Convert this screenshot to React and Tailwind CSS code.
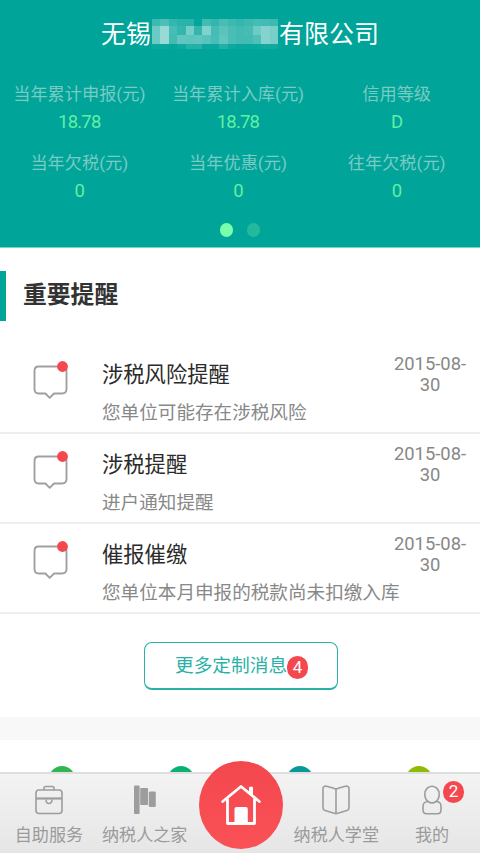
const stats = [
    { label: "当年累计申报(元)", value: "18.78" },
    { label: "当年累计入库(元)", value: "18.78" },
    { label: "信用等级", value: "D" },
    { label: "当年欠税(元)", value: "0" },
    { label: "当年优惠(元)", value: "0" },
    { label: "往年欠税(元)", value: "0" },
];

const reminders = [
    { id: 1, title: "涉税风险提醒", desc: "您单位可能存在涉税风险", date: "2015-08-30" },
    { id: 2, title: "涉税提醒", desc: "进户通知提醒", date: "2015-08-30" },
    { id: 3, title: "催报催缴", desc: "您单位本月申报的税款尚未扣缴入库", date: "2015-08-30" },
];

// White opacity (in %) of each block that masks the company name
const maskRows = [
    { height: 7, cells: [24, 30, 20, 17, 17, 2, 26, 20, 28, 24, 20, 24, 27, 26, 24] },
    { height: 9, cells: [42, 60, 28, 20, 46, 20, 50, 27, 35, 29, 26, 27, 43, 52, 47] },
    { height: 9, cells: [42, 60, 26, 38, 36, 38, 34, 28, 38, 29, 26, 26, 31, 52, 47] },
    { height: 5, cells: [4, 4, 2, 5, 15, 15, 3, 3, 13, 5, 3, 3, 4, 7, 6] },
];

const NameMask = () => (
    <div className="h-[30px] w-[126px]">
        {maskRows.map((row, i) => (
            <div key={i} className="flex" style={{ height: row.height }}>
                {row.cells.map((cell, j) => (
                    <div key={j} className="flex-1" style={{ backgroundColor: `rgba(255,255,255,${cell / 100})` }} />
                ))}
            </div>
        ))}
    </div>
);

const Header = () => (
    <header className="h-[248px] border-b border-[#7fd0cb] bg-[#00a499]">
        <div className="flex h-[68px] items-center justify-center gap-[1px] text-[25px] text-white">
            <span className="pt-[2px]">无锡</span>
            <NameMask />
            <span className="pt-[2px]">有限公司</span>
        </div>
        <div className="grid w-[476px] grid-cols-3 pt-3 text-center">
            {stats.map((stat) => (
                <div key={stat.label} className="h-[69px]">
                    <div className="h-7 text-[17.2px] leading-7 text-[#79cbc4]">{stat.label}</div>
                    <div className="h-7 text-[18.5px] leading-[28px] tracking-[-0.8px] text-[#5ff0a4]">{stat.value}</div>
                </div>
            ))}
        </div>
        <div className="mt-[5px] flex justify-center gap-[14px]">
            <span className="h-[14px] w-[13px] rounded-full bg-[#78ffac]" />
            <span className="h-[14px] w-[13px] rounded-full bg-[#23b99d]" />
        </div>
    </header>
);

const MessageIcon = () => (
    <svg width="38" height="42" viewBox="0 0 38 42" fill="none">
        <path
            d="M6.5 6.5H30Q34.5 6.5 34.5 11V29Q34.5 33.5 30 33.5H22L17.7 37.8L13.4 33.5H6.5Q2.5 33.5 2.5 29V11Q2.5 6.5 6.5 6.5Z"
            stroke="#a0a0a0"
            strokeWidth="1.9"
            strokeLinejoin="round"
        />
        <circle cx="30.5" cy="6.5" r="5.4" fill="#f5474e" />
    </svg>
);

const ReminderRow = ({ item }) => (
    <li className="flex h-[90px] border-b-2 border-[#eee]">
        <div className="w-[102px] shrink-0 pt-[16px] pl-[32px]">
            <MessageIcon />
        </div>
        <div className="min-w-0 flex-1 whitespace-nowrap">
            <div className="mt-[15px] h-8 text-[21.3px] leading-8 text-[#2b2b2b]">{item.title}</div>
            <div className="mt-[8px] h-7 text-[18.6px] leading-7 text-[#888]">{item.desc}</div>
        </div>
        <div className="mt-[9px] mr-[11px] w-[78px] shrink-0 text-center text-[18.4px] leading-[21px] text-[#888]">
            {item.date}
        </div>
    </li>
);

const BriefcaseIcon = () => (
    <svg width="28" height="30" viewBox="0 0 28 30" fill="none" stroke="#9d9d9d" strokeWidth="1.6">
        <rect x="1" y="5" width="26" height="23.5" rx="3" />
        <path d="M9 5V3.2Q9 1.5 10.7 1.5H17.3Q19 1.5 19 3.2V5" />
        <path d="M1 13.5H27" strokeWidth="2.2" />
        <path d="M11 14.5Q11 18.5 14 18.5T17 14.5" />
    </svg>
);

const FlagIcon = () => (
    <svg width="22" height="30" viewBox="0 0 22 30" fill="#9d9d9d">
        <rect x="0" y="0.5" width="5.6" height="28.5" rx="1" />
        <rect x="6.2" y="3" width="7.8" height="17" rx="0.8" />
        <rect x="14.8" y="6.5" width="7" height="15.5" rx="1.3" />
    </svg>
);

const BookIcon = () => (
    <svg width="28" height="30" viewBox="0 0 28 30" fill="none" stroke="#9d9d9d" strokeWidth="1.6" strokeLinejoin="round">
        <path d="M14 4Q9 2.5 4.5 1.2Q1 0.8 1 3.5V23Q1 24.8 3 25.4L14 28.7L25 25.4Q27 24.8 27 23V3.5Q27 0.8 23.5 1.2Q19 2.5 14 4Z" />
        <path d="M14 4V28.5" />
    </svg>
);

const UserIcon = () => (
    <svg width="20" height="30" viewBox="0 0 20 30" fill="none" stroke="#9d9d9d" strokeWidth="1.6">
        <path d="M6 16.5C3.8 14.7 2.8 12 2.8 9.3C2.8 4.8 5.8 1.3 10 1.3S17.2 4.8 17.2 9.3C17.2 12 16.2 14.7 14 16.5" />
        <path d="M6 16.5C3 16.5 1 18.5 1 21.5V25Q1 28.7 4.7 28.7H15.3Q19 28.7 19 25V21.5C19 18.5 17 16.5 14 16.5Q10 19.3 6 16.5Z" />
    </svg>
);

const HomeIcon = () => (
    <svg width="40" height="42" viewBox="0 0 40 42" fill="none">
        <path d="M1.7 17.5L20 2.5L38.3 17.5" stroke="#fff" strokeWidth="2.8" strokeLinecap="round" strokeLinejoin="round" />
        <path d="M28.5 3.2H31.5V11L28.5 8.5Z" fill="#fff" stroke="#fff" strokeLinejoin="round" />
        <path d="M6.5 14.5V39.5H33.5V14.5" stroke="#fff" strokeWidth="2.8" strokeLinejoin="round" />
        <path d="M13.5 39.5V25Q13.5 23 15.5 23H24.8Q26.8 23 26.8 25V39.5Z" fill="#fff" />
    </svg>
);

const NavItem = ({ label, badge, children }) => (
    <div className="flex flex-col items-center">
        <div className="relative mt-[11px] h-[30px]">
            {children}
            {badge && (
                <span className="absolute -top-[4px] left-[21px] flex h-[22px] w-[21px] items-center justify-center rounded-full bg-[#f5474e] text-[17px] text-white">
                    {badge}
                </span>
            )}
        </div>
        <span className="mt-[7px] text-[17.1px] leading-[26px] whitespace-nowrap text-[#9b9b9b]">{label}</span>
    </div>
);

const BottomNav = () => (
    <nav className="relative grid h-[81px] shrink-0 grid-cols-5 border-t-2 border-[#dedede] bg-linear-to-b from-[#f3f3f3] to-[#e6e6e6] pl-px">
        <NavItem label="自助服务">
            <BriefcaseIcon />
        </NavItem>
        <NavItem label="纳税人之家">
            <FlagIcon />
        </NavItem>
        <div className="-mt-[13px] ml-px flex h-[88px] w-[84px] items-center justify-center justify-self-center rounded-[50%] bg-linear-to-b from-[#f2474d] to-[#fa5157]">
            <HomeIcon />
        </div>
        <NavItem label="纳税人学堂">
            <BookIcon />
        </NavItem>
        <NavItem label="我的" badge="2">
            <UserIcon />
        </NavItem>
    </nav>
);

const App = () => {
    return (
        <div className="flex h-[853px] w-[480px] flex-col overflow-hidden bg-white font-[Roboto,'Noto_Sans_CJK_SC',sans-serif]">
            <Header />

            {/* Important reminders */}
            <div className="mt-[23px] flex h-[50px] items-center border-l-[6px] border-[#00a499] pl-[17px]">
                <h2 className="text-[23.8px] font-bold text-[#333]">重要提醒</h2>
            </div>
            <ul className="mt-[23px]">
                {reminders.map((item) => (
                    <ReminderRow key={item.id} item={item} />
                ))}
            </ul>
            <button className="mt-[28px] ml-[144px] flex h-[48px] w-[194px] shrink-0 items-center rounded-lg border border-b-2 border-[#2bb1a7] pt-[2px] pl-[30px] text-[18.7px] text-[#2bb1a7]">
                更多定制消息
                <span className="mt-[2px] flex h-[23px] w-[21px] items-center justify-center rounded-full bg-[#f5474e] text-[17px] text-white">
                    4
                </span>
            </button>

            {/* Shortcuts, mostly hidden behind the bottom bar */}
            <div className="mt-[27px] h-[23px] shrink-0 bg-[#f8f8f8]" />
            <div className="flex h-8 shrink-0 gap-[93px] overflow-hidden pt-[26px] pl-[49px]">
                <span className="h-[26px] w-[26px] rounded-full bg-[#30b650]" />
                <span className="h-[26px] w-[26px] rounded-full bg-[#0ab272]" />
                <span className="h-[26px] w-[26px] rounded-full bg-[#08989a]" />
                <span className="h-[26px] w-[26px] rounded-full bg-[#8fbb07]" />
            </div>
            <BottomNav />
        </div>
    );
};

export default App;
